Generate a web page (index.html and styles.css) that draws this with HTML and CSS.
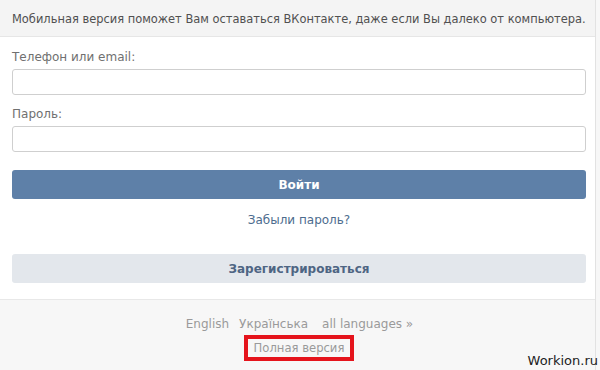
FILE: index.html
```html
<!DOCTYPE html>
<html lang="ru">
<head>
<meta charset="utf-8">
<title>ВКонтакте</title>
<link rel="stylesheet" href="styles.css">
</head>
<body>
<div class="page">
  <div class="notice">Мобильная версия поможет Вам оставаться ВКонтакте, даже если Вы далеко от компьютера.</div>
  <form class="form">
    <label class="label">Телефон или email:</label>
    <input class="input" type="text">
    <label class="label label-gap">Пароль:</label>
    <input class="input" type="password">
    <button class="btn btn-primary" type="button">Войти</button>
    <a class="forgot">Забыли пароль?</a>
    <button class="btn btn-secondary" type="button">Зарегистрироваться</button>
  </form>
  <div class="footer">
    <div class="langs"><a>English</a><a>Українська</a><a class="all">all languages »</a></div>
    <div class="full"><a class="full-link">Полная версия</a></div>
  </div>
</div>
<div class="watermark">Workion.ru</div>
</body>
</html>
```
FILE: styles.css
```css
html, body {
  margin: 0;
  height: 100%;
}
body {
  background: #f7f7f7;
  font-family: "DejaVu Sans", Tahoma, sans-serif;
  font-size: 12px;
  position: relative;
  overflow: hidden;
}
.page {
  width: 595px;
  border-right: 1px solid #e2e2e2;
  min-height: 370px;
  background: #f7f7f7;
}
.notice {
  height: 37px;
  box-sizing: border-box;
  padding: 11px 12px 0;
  color: #505050;
  font-size: 11.45px;
  line-height: 16px;
  background: #f4f4f4;
  border-bottom: 1px solid #e6e6e6;
  white-space: nowrap;
}
.form {
  margin: 0;
  background: #fff;
  padding: 12px 9px 16px 12px;
  display: flex;
  flex-direction: column;
  border-bottom: 1px solid #e8e8e8;
}
.label {
  color: #707070;
  line-height: 16px;
  margin-bottom: 4px;
}
.label-gap {
  margin-top: 11px;
}
.input {
  height: 26px;
  box-sizing: border-box;
  border: 1px solid #cfcfcf;
  border-radius: 3px;
  background: #fff;
  margin: 0;
  padding: 0 6px;
}
.btn {
  height: 29px;
  border: 0;
  border-radius: 3px;
  font-family: inherit;
  font-size: 12px;
  font-weight: bold;
  margin: 0;
}
.btn-primary {
  background: #5e80a8;
  color: #fff;
  margin-top: 18px;
}
.btn-secondary {
  background: #e3e7ec;
  color: #4e6583;
  margin-top: 26px;
}
.forgot {
  text-align: center;
  color: #4d6c8e;
  line-height: 16px;
  margin-top: 13px;
}
.footer {
  padding-top: 16px;
  display: flex;
  flex-direction: column;
  align-items: center;
}
.langs {
  display: flex;
  gap: 10px;
  color: #9a9a9a;
  line-height: 16px;
  margin-left: 4px;
}
.langs .all {
  margin-left: 4px;
}
.full {
  margin-top: 3px;
}
.full-link {
  display: block;
  border: 4px solid #e5141c;
  height: 18px;
  line-height: 18px;
  padding: 0 6px;
  font-size: 11.6px;
  color: #9a9a9a;
  margin-left: 3px;
}
.watermark {
  position: absolute;
  right: 2px;
  bottom: 2px;
  font-family: "DejaVu Sans", sans-serif;
  font-size: 13px;
  color: #222;
}
```
